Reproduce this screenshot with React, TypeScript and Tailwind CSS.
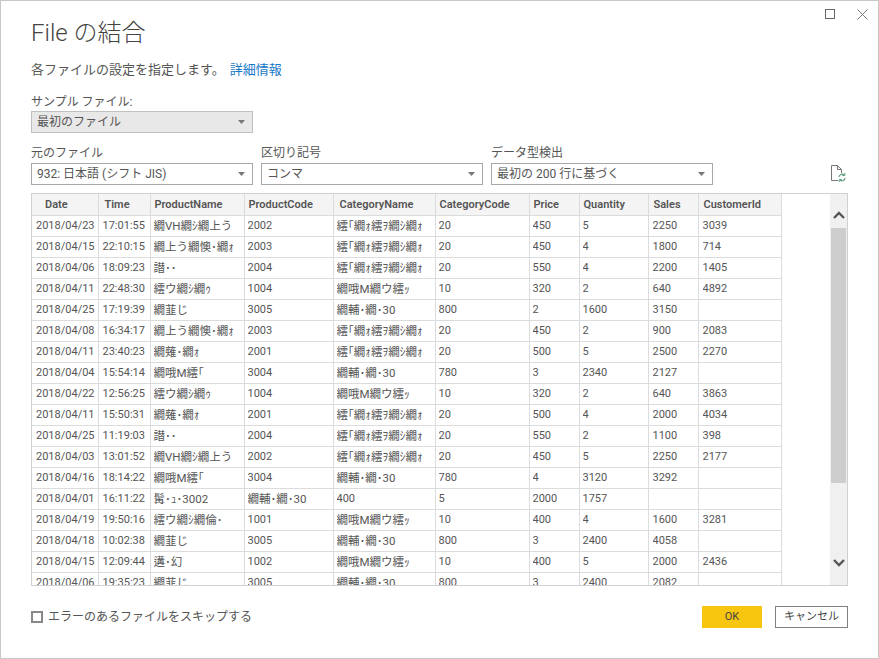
import React from "react";

const FONT = "font-['Roboto','Noto_Sans_CJK_JP',sans-serif]";

const cols = [66, 52, 94, 89, 102, 94, 50, 69, 50, 83];
const headers = ["Date", "Time", "ProductName", "ProductCode", "CategoryName", "CategoryCode", "Price", "Quantity", "Sales", "CustomerId"];
const thPad = ["pl-[13px]", "pl-[6px]", "pl-[4px]", "pl-[4px]", "pl-[6px]", "pl-[4px]", "pl-[4px]", "pl-[4px]", "pl-[5px]", "pl-[5px]"];
const tdPad = ["pl-[4px]", "pl-[4px]", "pl-[3px]", "pl-[3px]", "pl-[3px]", "pl-[3px]", "pl-[3px]", "pl-[3px]", "pl-[4px]", "pl-[4px]"];

const c1 = "繧｢繝ｫ繧ｦ繝ｼ繝ｫ";
const c2 = "繝哦M繝ウ繧ｯ";
const c3 = "繝輔･繝･30";

const rows: string[][] = [
  ["2018/04/23", "17:01:55", "繝VH繝ｼ繝上う", "2002", c1, "20", "450", "5", "2250", "3039"],
  ["2018/04/15", "22:10:15", "繝上う繝懊･繝ｫ", "2003", c1, "20", "450", "4", "1800", "714"],
  ["2018/04/06", "18:09:23", "譛･･", "2004", c1, "20", "550", "4", "2200", "1405"],
  ["2018/04/11", "22:48:30", "繧ウ繝ｼ繝ｩ", "1004", c2, "10", "320", "2", "640", "4892"],
  ["2018/04/25", "17:19:39", "繝韮じ", "3005", c3, "800", "2", "1600", "3150", ""],
  ["2018/04/08", "16:34:17", "繝上う繝懊･繝ｫ", "2003", c1, "20", "450", "2", "900", "2083"],
  ["2018/04/11", "23:40:23", "繝薙･繝ｫ", "2001", c1, "20", "500", "5", "2500", "2270"],
  ["2018/04/04", "15:54:14", "繝哦M繧｢", "3004", c3, "780", "3", "2340", "2127", ""],
  ["2018/04/22", "12:56:25", "繧ウ繝ｼ繝ｩ", "1004", c2, "10", "320", "2", "640", "3863"],
  ["2018/04/11", "15:50:31", "繝薙･繝ｫ", "2001", c1, "20", "500", "4", "2000", "4034"],
  ["2018/04/25", "11:19:03", "譛･･", "2004", c1, "20", "550", "2", "1100", "398"],
  ["2018/04/03", "13:01:52", "繝VH繝ｼ繝上う", "2002", c1, "20", "450", "5", "2250", "2177"],
  ["2018/04/16", "18:14:22", "繝哦M繧｢", "3004", c3, "780", "4", "3120", "3292", ""],
  ["2018/04/01", "16:11:22", "髯･ｭ･3002", c3, "400", "5", "2000", "1757", "", ""],
  ["2018/04/19", "19:50:16", "繧ウ繝ｼ繝倫･", "1001", c2, "10", "400", "4", "1600", "3281"],
  ["2018/04/18", "10:02:38", "繝韮じ", "3005", c3, "800", "3", "2400", "4058", ""],
  ["2018/04/15", "12:09:44", "遘･幻", "1002", c2, "10", "400", "5", "2000", "2436"],
  ["2018/04/06", "19:35:23", "繝韮じ", "3005", c3, "800", "3", "2400", "2082", ""],
];

function Arrow() {
  return (
    <svg width="7" height="4" viewBox="0 0 7 4" className="shrink-0">
      <path d="M0 0h7L3.5 4z" fill="#777" />
    </svg>
  );
}

function Select({ text, width, disabled }: { text: string; width: string; disabled?: boolean }) {
  return (
    <div className={`${width} h-[22px] flex items-center justify-between border pl-[5px] pr-[7px] ${disabled ? "bg-[#e8e8e8] border-[#c0c0c0]" : "bg-white border-[#a8a8a8]"}`}>
      <span className="text-[12px] leading-none text-[#555]">{text}</span>
      <Arrow />
    </div>
  );
}

function Field({ label, text, width }: { label: string; text: string; width: string }) {
  return (
    <div className="flex flex-col">
      <span className="text-[12px] leading-[19px] text-[#555]">{label}</span>
      <Select text={text} width={width} />
    </div>
  );
}

export default function App() {
  return (
    <div className={`${FONT} w-[879px] h-[659px] bg-white border border-[#c8c8c8] flex flex-col overflow-hidden text-[#555]`}>
      <div className="flex justify-end items-start gap-[22px] pt-[8px] pr-[10px] h-0">
        <svg width="10" height="10" viewBox="0 0 10 10"><rect x="0.5" y="0.5" width="9" height="9" fill="none" stroke="#666" /></svg>
        <svg width="11" height="11" viewBox="0 0 11 11"><path d="M.5.5l10 10M10.5.5l-10 10" stroke="#777" strokeWidth="1" fill="none" /></svg>
      </div>
      <div className="pl-[30px] pr-[31px] flex flex-col flex-1">
        <h1 className="mt-[8px] text-[24px] leading-[33px] font-light text-[#444]">File の結合</h1>
        <p className="mt-[11px] text-[13px] leading-[18px] text-[#555]">
          各ファイルの設定を指定します。<span className="ml-[5px] text-[#1878c8]">詳細情報</span>
        </p>
        <div className="mt-[14px] text-[12px] leading-[18px] text-[#555]">サンプル ファイル:</div>
        <Select text="最初のファイル" width="w-[222px]" disabled />
        <div className="mt-[11px] flex items-start gap-[8px]">
          <Field label="元のファイル" text="932: 日本語 (シフト JIS)" width="w-[222px]" />
          <Field label="区切り記号" text="コンマ" width="w-[222px]" />
          <Field label="データ型検出" text="最初の 200 行に基づく" width="w-[222px]" />
          <div className="ml-[109px] mt-[21px]">
            <svg width="16" height="18" viewBox="0 0 16 18">
              <path d="M8 15.5H1.5V.5h6l4 4V8M7.5.5v4h4" fill="none" stroke="#777" />
              <path d="M9 12a3 3 0 0 1 5-2M15 13a3 3 0 0 1-5 2" fill="none" stroke="#5a9c7c" strokeWidth="1.2" />
              <path d="M14.8 8v2.5h-2.5M9.2 17v-2.5h2.5" fill="none" stroke="#5a9c7c" />
            </svg>
          </div>
        </div>
        <div className="mt-[8px] w-[817px] h-[393px] border border-[#d0d0d0] flex overflow-hidden">
          <div className="w-[799px] h-full overflow-hidden">
            <table className="table-fixed border-collapse w-[749px] text-[11px] text-[#555]">
              <colgroup>
                {cols.map((w, i) => (
                  <col key={i} style={{ width: w }} />
                ))}
              </colgroup>
              <thead>
                <tr className="h-[21px] bg-[#f4f4f4]">
                  {headers.map((h, i) => (
                    <th key={h} className={`border border-[#dcdcdc] border-t-0 border-l-0 pr-0 pt-[2px] pb-0 font-semibold whitespace-nowrap overflow-hidden text-left ${thPad[i]}`}>
                      {h}
                    </th>
                  ))}
                </tr>
              </thead>
              <tbody>
                {rows.map((r) => (
                  <tr key={r[0] + r[1]} className="h-[21px]">
                    {r.map((c, i) => (
                      <td key={i} className={`h-[21px] border border-[#dcdcdc] border-l-0 pr-0 py-0 whitespace-nowrap overflow-hidden ${tdPad[i]}`}>
                        <div className={`h-[20px] overflow-hidden leading-[20px] ${/[^\x00-\x7f]/.test(c) ? "text-[11.5px]" : "text-[11px]"}`}>{c}</div>
                      </td>
                    ))}
                  </tr>
                ))}
              </tbody>
            </table>
          </div>
          <div className="flex-1" />
          <div className="w-[17px] h-full bg-[#f0f0f0] flex flex-col">
            <div className="h-[34px] shrink-0 flex items-end justify-center pb-[9px]">
              <svg width="12" height="8" viewBox="0 0 12 8"><path d="M1 7l5-5 5 5" fill="none" stroke="#555" strokeWidth="2.4" /></svg>
            </div>
            <div className="h-[255px] mx-px bg-[#cdcdcd]" />
            <div className="flex-1 flex items-end justify-center pb-[18px]">
              <svg width="12" height="8" viewBox="0 0 12 8"><path d="M1 1l5 5 5-5" fill="none" stroke="#555" strokeWidth="2.4" /></svg>
            </div>
          </div>
        </div>
        <div className="mt-[20px] flex items-center justify-between w-[817px]">
          <label className="flex items-center gap-[5px] text-[12px] text-[#555]">
            <span className="w-[12px] h-[12px] border-2 border-[#888]" />
            エラーのあるファイルをスキップする
          </label>
          <div className="flex items-center gap-[13px]">
            <button className="w-[60px] h-[22px] bg-[#f8c50f] text-[11px] text-[#444]">OK</button>
            <button className="w-[73px] h-[22px] border border-[#808080] bg-white text-[11px] text-[#444]">キャンセル</button>
          </div>
        </div>
      </div>
    </div>
  );
}
